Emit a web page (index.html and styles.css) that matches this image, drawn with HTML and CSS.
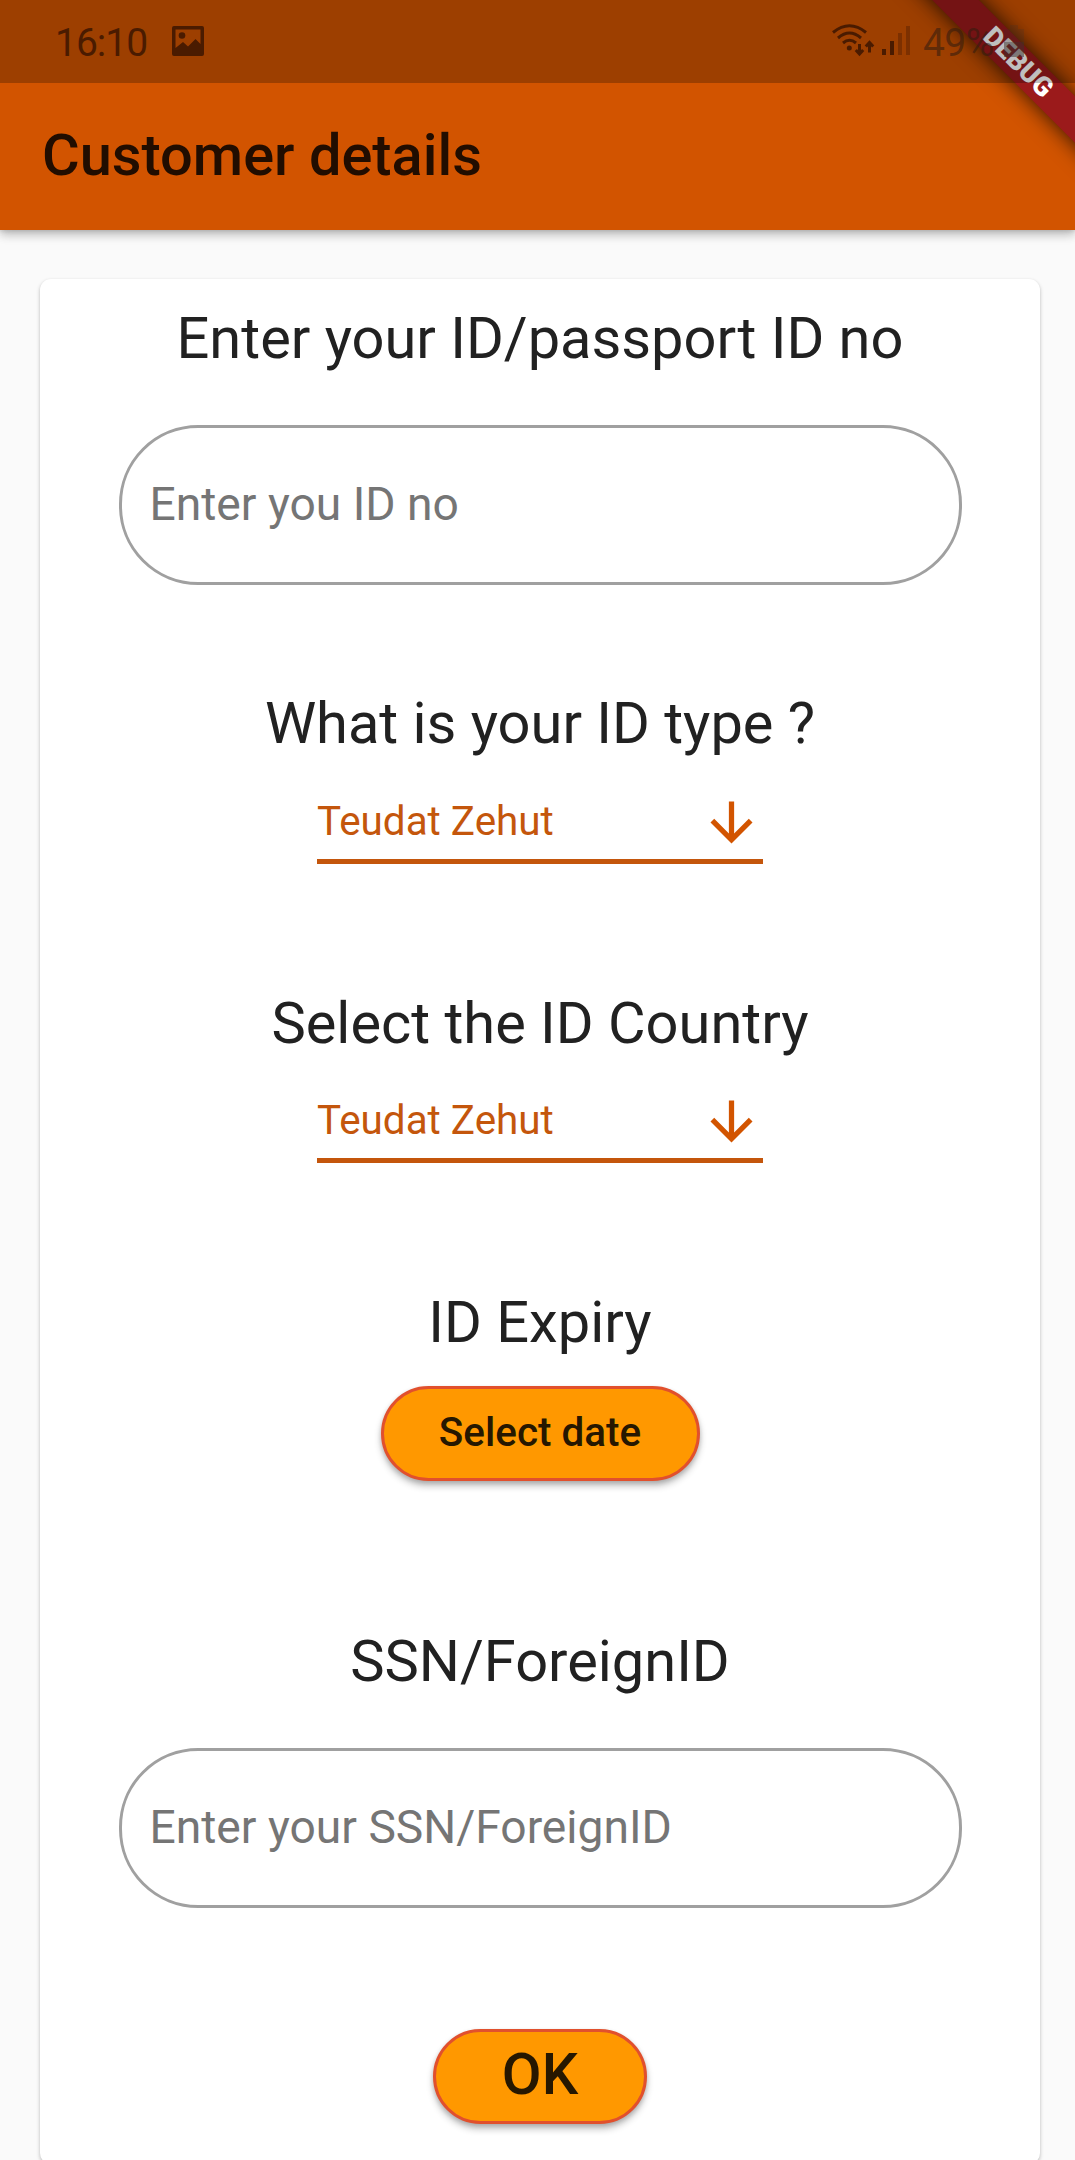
FILE: index.html
```html
<!DOCTYPE html>
<html lang="en">
<head>
<meta charset="utf-8">
<title>Customer details</title>
<link rel="stylesheet" href="styles.css">
</head>
<body>
<div class="screen">
  <header class="app-header">
    <div class="status-bar">
      <span class="clock">16:10</span>
      <svg class="picture-icon" viewBox="0 0 32 30"><path fill-rule="evenodd" d="M2 0h28a2 2 0 0 1 2 2v26a2 2 0 0 1-2 2H2a2 2 0 0 1-2-2V2a2 2 0 0 1 2-2zM3.500 3.500V22L11 16l5 4.500 7.500-7.500 5 5V3.500z"/><circle cx="10" cy="9.500" r="3.300"/></svg>
      <span class="spacer"></span>
      <svg class="wifi-icon" viewBox="0 0 42 32"><g fill="none" stroke="currentColor" stroke-width="3"><path d="M1 8.500Q17.500-5 34 8.500"/><path d="M6 14Q17.500 4 29 14"/><path d="M11 19Q17.500 13.500 24 19"/><path d="M27.500 20v10M23.800 26L27.500 30l3.700-4"/><path d="M37.500 28.500v-10M33.800 22.500l3.700-4 3.700 4"/></g><circle cx="17.300" cy="24" r="2.500"/></svg>
      <svg class="signal-icon" viewBox="0 0 28 30"><path d="M0 23h4v6H0zM8 15h4v14H8z"/><path opacity=".4" d="M16 7h4v22h-4zM24 0h4v29h-4z"/></svg>
      <span class="battery-level">49%</span>
      <svg class="battery-icon" viewBox="0 0 20 32"><path opacity=".4" d="M6 0h8v4h6v13H0V4h6z"/><path d="M0 17h20v15H0z"/></svg>
    </div>
    <div class="title-bar"><h1 class="title">Customer details</h1></div>
    <div class="debug-ribbon">DEBUG</div>
  </header>
  <main class="card">
    <section class="field id-number">
      <h2 class="heading">Enter your ID/passport ID no</h2>
      <input class="text-input" type="text" placeholder="Enter you ID no">
    </section>
    <section class="field id-type">
      <h2 class="heading">What is your ID type ?</h2>
      <div class="dropdown"><span>Teudat Zehut</span><svg class="arrow" viewBox="0 0 24 24"><path d="M20 12l-1.410-1.410L13 16.170V4h-2v12.170l-5.580-5.590L4 12l8 8 8-8z"/></svg></div>
    </section>
    <section class="field id-country">
      <h2 class="heading">Select the ID Country</h2>
      <div class="dropdown"><span>Teudat Zehut</span><svg class="arrow" viewBox="0 0 24 24"><path d="M20 12l-1.410-1.410L13 16.170V4h-2v12.170l-5.580-5.590L4 12l8 8 8-8z"/></svg></div>
    </section>
    <section class="field id-expiry">
      <h2 class="heading">ID Expiry</h2>
      <button class="button date-button">Select date</button>
    </section>
    <section class="field foreign-id">
      <h2 class="heading">SSN/ForeignID</h2>
      <input class="text-input" type="text" placeholder="Enter your SSN/ForeignID">
    </section>
    <button class="button ok-button">OK</button>
  </main>
</div>
</body>
</html>
```
FILE: styles.css
```css
* { box-sizing: border-box; margin: 0; padding: 0; }
body { background: #fafafa; font-family: Roboto, sans-serif; overflow: hidden; }
.screen { height: 2160px; overflow: hidden; display: flex; flex-direction: column; }

.app-header { position: relative; flex: none; height: 230px; background: #d25400; box-shadow: 0 5px 10px rgba(0,0,0,.14), 0 3px 10px rgba(0,0,0,.16), 0 1px 4px rgba(0,0,0,.1); }
/* The status bar is a translucent layer over the header and the ribbon. */
.status-bar { position: relative; z-index: 2; height: 83px; background: rgba(0,0,0,.25); color: #4a1b00; display: flex; align-items: flex-start; padding: 0 51px 0 55px; }
.status-bar svg { fill: currentColor; flex: none; }
.clock, .battery-level { font-size: 39px; line-height: 47px; margin-top: 20px; letter-spacing: -.6px; white-space: nowrap; }
.clock { width: 97px; letter-spacing: -1px; }
.picture-icon { width: 32px; height: 30px; margin: 26px 0 0 20px; }
.spacer { flex: 1; }
.wifi-icon { width: 42px; height: 32px; margin: 24px 8px 0 0; overflow: visible; }
.signal-icon { width: 28px; height: 30px; margin: 26px 13px 0 0; }
.battery-level { width: 81px; color: rgba(50,28,15,.58); }
.battery-icon { width: 20px; height: 32px; margin-top: 25px; color: rgba(60,50,45,.5); }
.title-bar { height: 147px; display: flex; align-items: center; padding: 0 0 3px 42px; }
.title { font-size: 57.750px; font-weight: 500; line-height: 68px; color: #210d00; white-space: nowrap; }

.debug-ribbon { position: absolute; z-index: 1; right: -142.500px; top: 45.500px; width: 400px; height: 33px; background: #9b1a1b; color: #fff; font-size: 27px; font-weight: 900; line-height: 33px; text-align: center; transform: rotate(45deg); box-shadow: 0 0 22px rgba(0,0,0,.8); }

.card { flex: none; width: 1000px; height: 1885px; margin: 49px 0 0 40px; padding-top: 25px; background: #fff; border-radius: 11px; box-shadow: 0 2px 4px rgba(0,0,0,.2), 0 1px 3px rgba(0,0,0,.08); display: flex; flex-direction: column; align-items: center; }
.field { flex: none; display: flex; flex-direction: column; align-items: center; }
.heading { font-size: 57.750px; font-weight: 400; line-height: 68px; color: #212121; white-space: nowrap; }
.text-input { width: 843px; height: 160px; border: 3px solid #a0a0a0; border-radius: 79px; padding: 0 28px 2px; font: 400 46.200px Roboto, sans-serif; color: #212121; background: transparent; outline: none; }
.text-input::placeholder { color: #757575; opacity: 1; }
.id-number { height: 385px; gap: 53px; }
.id-type { height: 300px; }
.id-country { height: 299px; }
.id-expiry { height: 339px; gap: 30px; }
.foreign-id { height: 402px; gap: 53px; }
.dropdown { width: 446px; height: 82px; margin-top: 25px; border-bottom: 5px solid #c4560c; display: flex; justify-content: space-between; color: #c4560c; font-size: 40.425px; line-height: 48px; white-space: nowrap; }
.id-country .dropdown { margin-top: 24px; }
.dropdown span { margin-top: 16px; }
.arrow { width: 63px; height: 63px; margin-top: 9px; fill: #d25400; }
.button { height: 95px; border: 3px solid #e1502d; border-radius: 48px; background: #ff9800; color: #261700; font-family: Roboto, sans-serif; font-weight: 500; text-align: center; box-shadow: 0 5px 7px rgba(0,0,0,.24), 0 2px 4px rgba(0,0,0,.14); flex: none; }
.date-button { width: 319px; font-size: 40.425px; padding-bottom: 3px; }
.ok-button { width: 214px; font-size: 57.750px; padding-bottom: 5px; }
```
